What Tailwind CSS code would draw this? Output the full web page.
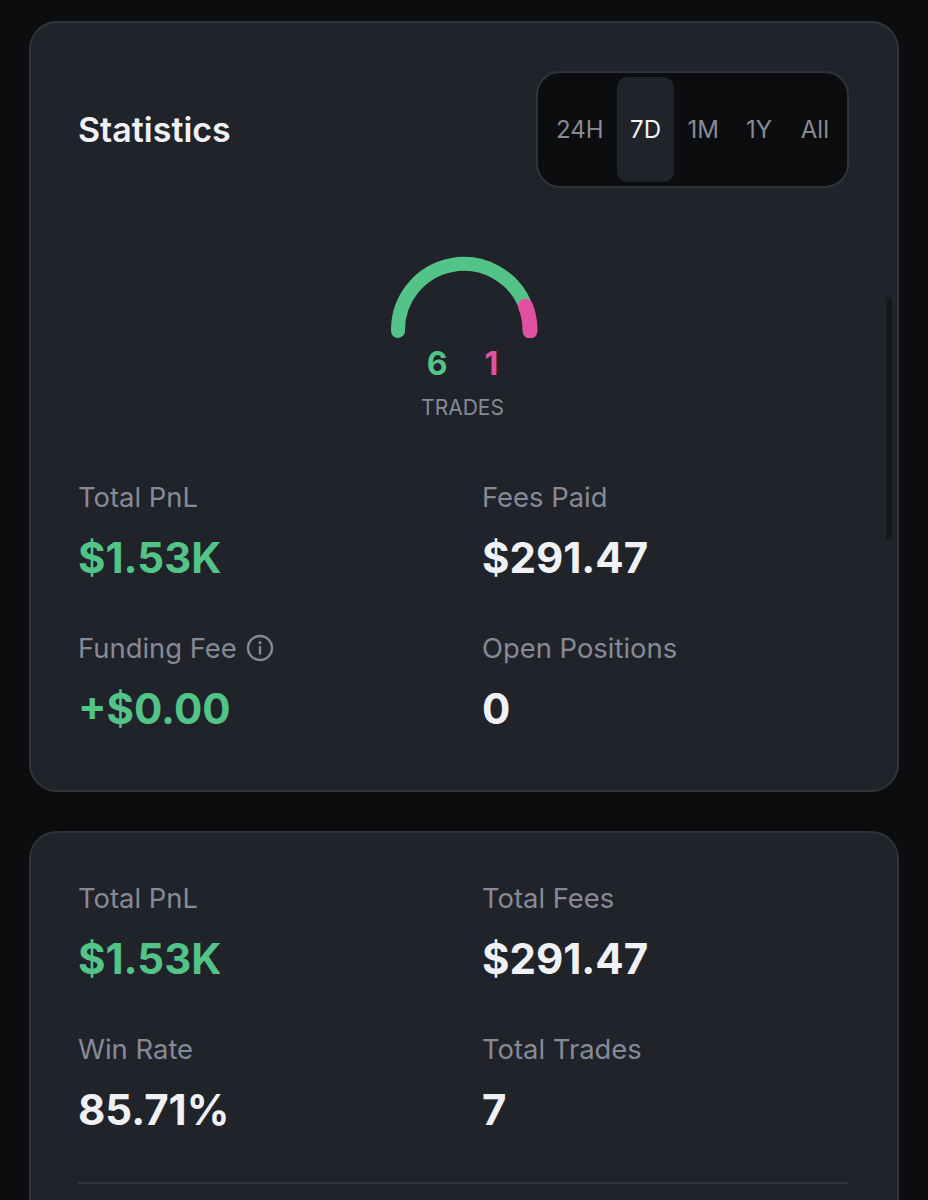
<!DOCTYPE html>
<html lang="en">
<head>
  <meta charset="UTF-8">
  <title>Statistics</title>
  <script src="https://cdn.jsdelivr.net/npm/@tailwindcss/browser@4"></script>
</head>
<body class="bg-[#0c0d0e] h-[1200px] overflow-hidden font-['Inter',sans-serif]">
  <div class="px-[29px] pt-[21px] flex flex-col gap-[39px] h-[1200px] overflow-hidden">

    <!-- Statistics card -->
    <section class="relative shrink-0 h-[771px] bg-[#20232a] border-2 border-[#30343a] rounded-[28px] pl-[47px] pr-[48px]">
      <div class="flex items-center justify-between pt-[48px]">
        <h2 class="text-[34px] leading-[40px] font-semibold text-[#f0f1f4]">Statistics</h2>
        <div class="flex items-center w-[313px] h-[117px] bg-[#0c0d0e] border-2 border-[#30343a] rounded-[24px] py-[4px] pl-[18px] text-[24px] text-[#878a96]">
          <span class="w-[61px]">24H</span>
          <span class="w-[57px] h-full flex items-center justify-center bg-[#20232a] rounded-[10px] text-[#f0f1f4]">7D</span>
          <span class="w-[45px] text-right">1M</span>
          <span class="w-[53px] text-right">1Y</span>
          <span class="w-[57px] text-right">All</span>
        </div>
      </div>

      <div class="flex flex-col items-center mt-[68px] -ml-[2px]">
        <svg class="ml-[7px]" width="150" height="82" viewBox="0 0 150 82" fill="none" stroke-width="14" stroke-linecap="round">
          <path d="M7 75 A66 66 0 0 1 134.5 50" stroke="#53c487"/>
          <path d="M134.5 50 A66 66 0 0 1 139 75" stroke="#e0529f" stroke-width="15"/>
        </svg>
        <div class="flex justify-center gap-[37px] mt-[6px] text-[32px] leading-[40px] font-bold">
          <span class="text-[#53c487]">6</span>
          <span class="text-[#e0529f]">1</span>
        </div>
        <div class="mt-[11px] text-[21px] leading-[26px] text-[#878a96]">TRADES</div>
      </div>

      <div class="grid grid-cols-[404px_1fr] mt-[59px] gap-y-[46px]">
        <div>
          <div class="text-[27.4px] leading-[34px] text-[#878a96]">Total PnL</div>
          <div class="mt-[17px] text-[42px] leading-[54px] font-bold text-[#53c487]">$1.53K</div>
        </div>
        <div>
          <div class="text-[27.4px] leading-[34px] text-[#878a96]">Fees Paid</div>
          <div class="mt-[17px] text-[42px] leading-[54px] font-bold text-[#f0f1f4]">$291.47</div>
        </div>
        <div>
          <div class="flex items-center gap-[9px] text-[27.4px] leading-[34px] text-[#878a96]">
            Funding Fee
            <svg width="28" height="28" viewBox="0 0 28 28" fill="none" stroke="#878a96" stroke-width="2.4" stroke-linecap="round">
              <circle cx="14" cy="14" r="12"/>
              <path d="M14 13v6.5"/>
              <path d="M14 8.6v.2" stroke-width="3"/>
            </svg>
          </div>
          <div class="mt-[17px] text-[42px] leading-[54px] font-bold text-[#53c487]">+$0.00</div>
        </div>
        <div>
          <div class="text-[27.4px] leading-[34px] text-[#878a96]">Open Positions</div>
          <div class="mt-[17px] text-[42px] leading-[54px] font-bold text-[#f0f1f4]">0</div>
        </div>
      </div>

      <!-- overlay scrollbar -->
      <div class="absolute right-[5px] top-[274px] w-[6px] h-[243px] rounded-full bg-[#16181c]"></div>
    </section>

    <!-- Summary card -->
    <section class="shrink-0 h-[500px] bg-[#20232a] border-2 border-[#30343a] rounded-[28px] pl-[47px] pr-[48px] pt-[48px]">
      <div class="grid grid-cols-[404px_1fr] gap-y-[46px]">
        <div>
          <div class="text-[27.4px] leading-[34px] text-[#878a96]">Total PnL</div>
          <div class="mt-[17px] text-[42px] leading-[54px] font-bold text-[#53c487]">$1.53K</div>
        </div>
        <div>
          <div class="text-[27.4px] leading-[34px] text-[#878a96]">Total Fees</div>
          <div class="mt-[17px] text-[42px] leading-[54px] font-bold text-[#f0f1f4]">$291.47</div>
        </div>
        <div>
          <div class="text-[27.4px] leading-[34px] text-[#878a96]">Win Rate</div>
          <div class="mt-[17px] text-[42px] leading-[54px] font-bold text-[#f0f1f4]">85.71%</div>
        </div>
        <div>
          <div class="text-[27.4px] leading-[34px] text-[#878a96]">Total Trades</div>
          <div class="mt-[17px] text-[42px] leading-[54px] font-bold text-[#f0f1f4]">7</div>
        </div>
      </div>
      <div class="mt-[45px] h-[2px] bg-[#30343a]"></div>
    </section>
  </div>
</body>
</html>
